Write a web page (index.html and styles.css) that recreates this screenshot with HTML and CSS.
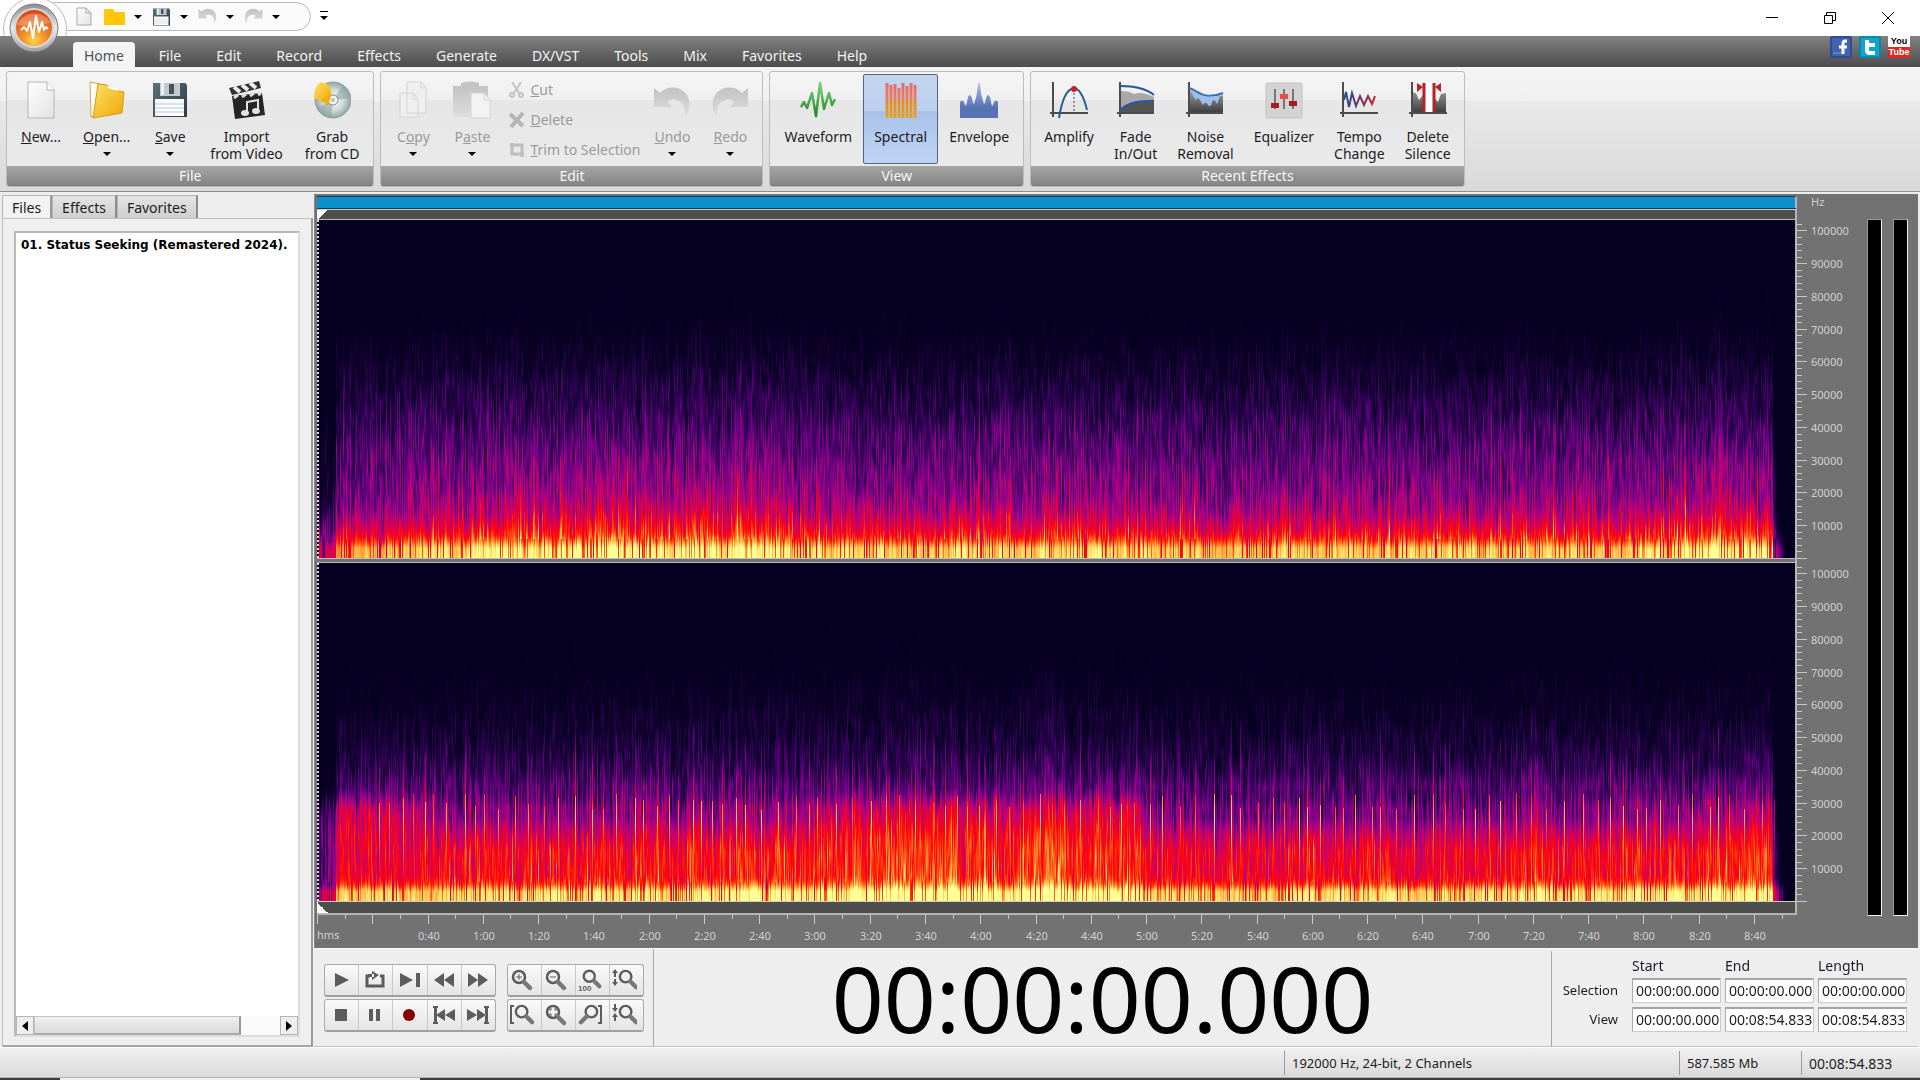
FILE: index.html
```html
<!DOCTYPE html>
<html lang="en">
<head>
    <meta charset="UTF-8">
    <meta name="viewport" content="width=device-width, initial-scale=1.0">
    <title>Audio Editor</title>
    <link rel="stylesheet" href="styles.css">
</head>
<body>
<!-- shared gradients and small shapes -->
<svg class="defs" aria-hidden="true">
    <defs>
        <linearGradient id="g-page" x1="0" y1="0" x2="1" y2="1"><stop offset="0" stop-color="#fff"/><stop offset="1" stop-color="#e2e2e2"/></linearGradient>
        <linearGradient id="g-folder" x1="0" y1="0" x2="1" y2="1"><stop offset="0" stop-color="#ffdf6b"/><stop offset="1" stop-color="#eea800"/></linearGradient>
        <linearGradient id="g-disk" x1="0" y1="0" x2="1" y2="1"><stop offset="0" stop-color="#5d7079"/><stop offset="1" stop-color="#2c3a44"/></linearGradient>
        <linearGradient id="g-green" x1="0" y1="0" x2="0" y2="1"><stop offset="0" stop-color="#7fd07c"/><stop offset="1" stop-color="#1f8a22"/></linearGradient>
        <linearGradient id="g-bars" gradientUnits="userSpaceOnUse" x1="0" y1="2" x2="0" y2="37"><stop offset="0" stop-color="#ea6a68"/><stop offset=".45" stop-color="#e97f5e"/><stop offset=".5" stop-color="#e08a2c"/><stop offset="1" stop-color="#e2a52e"/></linearGradient>
        <linearGradient id="g-blue" x1="0" y1="0" x2="0" y2="1"><stop offset="0" stop-color="#a9c0ee"/><stop offset=".7" stop-color="#5673b4"/></linearGradient>
        <linearGradient id="g-dark" x1="0" y1="0" x2="0" y2="1"><stop offset="0" stop-color="#999"/><stop offset="1" stop-color="#3c3c3c"/></linearGradient>
        <linearGradient id="g-tempo" x1="0" y1="0" x2="1" y2="0"><stop offset="0" stop-color="#1d5390"/><stop offset="1" stop-color="#c02030"/></linearGradient>
        <linearGradient id="g-fade" x1="0" y1="0" x2="0" y2="1"><stop offset="0" stop-color="#c2c2c2"/><stop offset="1" stop-color="#dedede"/></linearGradient>
        <linearGradient id="g-ring" x1="0" y1="0" x2="0" y2="1"><stop offset="0" stop-color="#8b8d90"/><stop offset=".5" stop-color="#e9eaec"/><stop offset="1" stop-color="#9c9ea2"/></linearGradient>
        <radialGradient id="g-orb" cx=".5" cy=".85" r=".8"><stop offset="0" stop-color="#ffd24a"/><stop offset=".45" stop-color="#f08a28"/><stop offset="1" stop-color="#dd4a1c"/></radialGradient>
        <radialGradient id="g-cd"><stop offset="0" stop-color="#fff"/><stop offset=".6" stop-color="#cfd8d8"/><stop offset="1" stop-color="#8fa3a3"/></radialGradient>
        <symbol id="i-disk" viewBox="0 0 36 36">
            <path d="M1 1h32l2 2v32H1z" fill="url(#g-disk)"/>
            <path d="M8 1h20v13H8z" fill="#c3cace"/><path d="M17 2h5v10h-5z" fill="#45545e"/><path d="M9 1h3v12H9z" fill="#eef1f2"/>
            <path d="M3 17h29v17H3z" fill="#fbfcfd"/><path d="M3 22h29M3 26h29M3 30h29" stroke="#b7c7dd"/>
        </symbol>
        <symbol id="i-undo" viewBox="0 0 36 36">
            <path d="M0 2l6 5C14-1 27 0 33 9c4 7 3 16-2 22 1-9-2-16-9-17-4-1-7 0-8 2l4 5H0z" fill="url(#g-fade)"/>
        </symbol>
        <symbol id="i-glass" viewBox="0 0 24 24">
            <circle cx="9" cy="9" r="6" fill="none" stroke="#5c5c5c" stroke-width="2.5"/>
            <path d="M14 14l6 6" stroke="#777" stroke-width="4.5" stroke-linecap="round"/>
        </symbol>
    </defs>
</svg>

<div class="app">
    <header class="titlebar">
        <div class="quick">
            <button aria-label="New"><svg width="16" height="20" viewBox="0 0 16 20"><path d="M1 1h9l5 5v12H1z" fill="url(#g-page)" stroke="#aaa"/><path d="M10 1v5h5" fill="none" stroke="#aaa"/></svg></button>
            <button aria-label="Open"><svg width="21" height="18" viewBox="0 0 21 18"><path d="M0 2q0-1 1-1h8l2 3h9q1 0 1 1v12H0z" fill="#ffc60a"/></svg></button>
            <i class="arrow"></i>
            <button aria-label="Save"><svg width="19" height="18"><use href="#i-disk"/></svg></button>
            <i class="arrow"></i>
            <button aria-label="Undo"><svg width="19" height="18"><use href="#i-undo"/></svg></button>
            <i class="arrow"></i>
            <button aria-label="Redo" class="flip"><svg width="19" height="18"><use href="#i-undo"/></svg></button>
            <i class="arrow"></i>
        </div>
        <button class="customize" aria-label="Customize toolbar"><i class="arrow"></i></button>
        <div class="window-buttons">
            <button aria-label="Minimize"><svg width="12" height="12"><path d="M0 5.5h12" stroke="#000"/></svg></button>
            <button aria-label="Restore"><svg width="12" height="12" fill="none" stroke="#000"><path d="M.5 3.500h8v8h-8zM2.500 3V.5h9v8H9"/></svg></button>
            <button aria-label="Close"><svg width="12" height="12"><path d="M0 0l12 12M12 0L0 12" stroke="#000"/></svg></button>
        </div>
    </header>
    <button class="orb" aria-label="Main menu">
        <svg width="50" height="50" viewBox="0 0 50 50">
            <circle cx="25" cy="25" r="24" fill="url(#g-ring)" stroke="#77797c"/>
            <circle cx="25" cy="25" r="20" fill="#d5d7da"/>
            <circle cx="25" cy="25" r="18" fill="url(#g-orb)"/>
            <path d="M8 22a18 15 0 0 1 34-2q-16 3-34 2z" fill="#fff" opacity=".25"/>
            <path d="M12 27l3-3 3 4 3-9 3 16 3-22 3 16 3-10 2 8 2-3 2 2" fill="none" stroke="#fff" stroke-width="2" stroke-linejoin="round"/>
        </svg>
    </button>

    <nav class="menubar">
        <button class="active">Home</button>
        <button>File</button>
        <button>Edit</button>
        <button>Record</button>
        <button>Effects</button>
        <button>Generate</button>
        <button>DX/VST</button>
        <button>Tools</button>
        <button>Mix</button>
        <button>Favorites</button>
        <button>Help</button>
        <div class="social">
            <a href="#facebook" aria-label="Facebook"><svg width="22" height="22"><rect width="22" height="22" rx="2" fill="#2f4d96"/><path d="M2 2h18v18H2z" fill="#4364ad"/><path d="M3 17h10" stroke="#7d97cf"/><path d="M17 5h-2q-2 0-2 3v10M9 11h8" stroke="#fff" stroke-width="3" fill="none"/></svg></a>
            <a href="#twitter" aria-label="Twitter"><svg width="22" height="22"><rect width="22" height="22" rx="2" fill="#0d86ad"/><path d="M2 2h18v18H2z" fill="#12a4cd"/><path d="M8 4v10q0 3 3 3h5M8 9h8" stroke="#fff" stroke-width="4" fill="none"/></svg></a>
            <a href="#youtube" class="youtube"><span>You</span><span>Tube</span></a>
        </div>
    </nav>

    <section class="ribbon">
        <div class="group">
            <div class="tools">
                <button class="tool"><svg width="36" height="38" viewBox="0 0 36 38"><path d="M5 1h19l7 8v28H5z" fill="url(#g-page)" stroke="#b4b4b4"/><path d="M24 1v8h7" fill="#fff" stroke="#b4b4b4"/></svg><span><u>N</u>ew...</span></button>
                <button class="tool"><svg width="36" height="38" viewBox="0 0 36 38"><path d="M1 1l10 2-3 31-6 2z" fill="#fff" stroke="#d9a63a"/><path d="M9 3l9 1 4 4 13 3-2 21-29 5z" fill="url(#g-folder)" stroke="#d99a10"/><path d="M17 5l13 3-1 2-8-2z" fill="#fff"/></svg><span><u>O</u>pen...</span><i class="arrow"></i></button>
                <button class="tool"><svg width="36" height="38" viewBox="0 -1 36 38"><use href="#i-disk" width="36" height="36"/></svg><span><u>S</u>ave</span><i class="arrow"></i></button>
                <button class="tool"><svg width="38" height="38" viewBox="0 0 38 38"><path d="M4 15l30-3 3 22-30 4z" fill="#252525"/><path d="M1 7L31 0l2 7L4 14z" fill="#333"/><path d="M6 6l6 5M14 4l6 5M22 2l6 5" stroke="#eee" stroke-width="4"/><path d="M6 17l4-3M14 16l4-3M22 15l4-3M30 14l3-2" stroke="#ddd" stroke-width="3"/><path d="M19 32V21l11-2v11" stroke="#dfe3e6" stroke-width="2" fill="none"/><ellipse cx="17" cy="32" rx="4" ry="3" fill="#dfe3e6"/><ellipse cx="28" cy="30" rx="4" ry="3" fill="#dfe3e6"/></svg><span>Import<br>from Video</span></button>
                <button class="tool"><svg width="38" height="38" viewBox="0 0 38 38"><circle cx="20" cy="19" r="18" fill="url(#g-cd)" stroke="#94a4a4"/><path d="M20 19L30 4q7 5 8 13zM20 19l-2 18q-10-1-14-10z" fill="#8ea7a5" opacity=".6"/><circle cx="20" cy="19" r="5" fill="#f4f4f4" stroke="#889"/><circle cx="20" cy="19" r="2" fill="#bbb"/><path d="M1 17Q1 5 8 1l9 3 1 9-6 9-11-5z" fill="url(#g-folder)"/><path d="M8 19l11-7-4 13z" fill="#efae18"/></svg><span>Grab<br>from CD</span></button>
            </div>
            <div class="caption">File</div>
        </div>
        <div class="group">
            <div class="tools">
                <button class="tool off"><svg width="36" height="38" viewBox="0 0 36 38"><path d="M8 1h14l5 6v25H8zM1 12h13l5 6v18H1z" transform="translate(4)" fill="#efefef" stroke="#d4d4d4"/><path d="M18 12v6h5M26 1v6h5" fill="none" stroke="#d4d4d4"/></svg><span>C<u>o</u>py</span><i class="arrow"></i></button>
                <button class="tool off"><svg width="38" height="38" viewBox="0 0 38 38"><path d="M0 5h35v31H0z" fill="url(#g-fade)"/><path d="M8 2q10-3 18 0v6H8z" fill="#c4c4c4"/><path d="M18 12h13l6 7v18H18z" fill="#f3f3f3" stroke="#d4d4d4"/><path d="M31 12v7h6" fill="none" stroke="#d4d4d4"/></svg><span>P<u>a</u>ste</span><i class="arrow"></i></button>
                <div class="stack">
                    <button><svg width="16" height="16" fill="none" stroke="#c4c4c4" stroke-width="2"><path d="M3 0l7 11M12 0L5 11"/><circle cx="3" cy="13" r="2"/><circle cx="12" cy="13" r="2"/></svg><span><u>C</u>ut</span></button>
                    <button><svg width="16" height="16"><path d="M1 2l13 12M14 1L2 15" stroke="#b5b5b5" stroke-width="4"/></svg><span><u>D</u>elete</span></button>
                    <button><svg width="16" height="16"><path d="M1 3h12v12M3 1v11h12" fill="none" stroke="#bdbdbd" stroke-width="3"/></svg><span><u>T</u>rim to Selection</span></button>
                </div>
                <button class="tool off"><svg width="36" height="38"><use href="#i-undo" y="5" width="36" height="36"/></svg><span><u>U</u>ndo</span><i class="arrow"></i></button>
                <button class="tool off flip"><svg width="36" height="38"><use href="#i-undo" y="5" width="36" height="36"/></svg><span><u>R</u>edo</span><i class="arrow"></i></button>
            </div>
            <div class="caption">Edit</div>
        </div>
        <div class="group">
            <div class="tools">
                <button class="tool"><svg width="36" height="38" viewBox="0 0 36 38"><path d="M1 26l3-5 3 6 5-15 4 23L20 2l4 26 5-16 3 12 3-6" fill="none" stroke="url(#g-green)" stroke-width="2.500" stroke-linejoin="round"/></svg><span>Waveform</span></button>
                <button class="tool active"><svg width="36" height="38" viewBox="0 0 36 38"><path d="M5 2v35M9 4v33M13 3v34M17 7v30M21 2v35M25 5v32M29 2v35M33 4v33" transform="translate(-1)" fill="none" stroke="url(#g-bars)" stroke-width="3"/></svg><span>Spectral</span></button>
                <button class="tool"><svg width="38" height="38" viewBox="0 0 38 38"><path d="M0 37V21q3-4 5 3l1 1q1-3 2-9 3-6 5 6l1 1q3-8 4-18 1-8 2 0 1 10 4 18l1-1q2-12 5-6 1 6 2 9l1-1q2-7 5-3v16z" fill="url(#g-blue)"/></svg><span>Envelope</span></button>
            </div>
            <div class="caption">View</div>
        </div>
        <div class="group effects">
            <div class="tools">
                <button class="tool"><svg width="38" height="38" viewBox="0 0 38 38"><path d="M3 1v35M0 32h38" stroke="#4c4c4c" stroke-width="2"/><path d="M24 8v24" stroke="#444" stroke-dasharray="2"/><path d="M9 37C15 0 30-2 37 29" fill="none" stroke="#1f5f96" stroke-width="2"/><circle cx="24" cy="8" r="3" fill="#c91f2b"/></svg><span>Amplify</span></button>
                <button class="tool"><svg width="38" height="38" viewBox="0 0 38 38"><path d="M4 10q8 0 13 3 8-3 20 3v16H4z" fill="#a8a8a8"/><path d="M4 29q4-6 9-5 8-4 24-3v11H4z" fill="#555"/><path d="M3 1v35M0 32h37" stroke="#4c4c4c" stroke-width="2"/><path d="M3 5q23 0 34 9M3 29q10-10 34-9" fill="none" stroke="#2456a5" stroke-width="2"/></svg><span>Fade<br>In/Out</span></button>
                <button class="tool"><svg width="38" height="38" viewBox="0 0 38 38"><path d="M3 8c9 2 14 13 34 5v19H3z" fill="#9dbfea"/><path d="M3 12q3-3 4 3l3 4q2-4 4 0l3 5q3-5 5 0 3 3 4-3 2-5 5 2l3-8 3 0v17H3z" fill="url(#g-dark)"/><path d="M3 1v35M0 32h37" stroke="#4c4c4c" stroke-width="2"/><path d="M3 7c9 2 14 13 34 5" fill="none" stroke="#3b70b0" stroke-width="2"/></svg><span>Noise<br>Removal</span></button>
                <button class="tool"><svg width="38" height="38" viewBox="0 0 38 38"><rect x="1" y="2" width="36" height="35" rx="2" fill="#d3d3d3" stroke="#c2c2c2"/><path d="M10 8v20M19 8v20M28 8v20" stroke="#777" stroke-width="2"/><path d="M6 22h8v5H6zM24 20h8v5h-8z" fill="#a31c22"/><path d="M15 13h8v5h-8z" fill="#ea4a4a"/></svg><span>Equalizer</span></button>
                <button class="tool"><svg width="38" height="38" viewBox="0 0 38 38"><path d="M3 1v35M0 32h38" stroke="#4c4c4c" stroke-width="2"/><path d="M4 19l2-8 3 15 3-14 4 13 4-10 4 9 4-9 4 8 3-8" fill="none" stroke="url(#g-tempo)" stroke-width="2"/></svg><span>Tempo<br>Change</span></button>
                <button class="tool"><svg width="38" height="38" viewBox="0 0 38 38"><path d="M3 9q2 4 4 3l3 7 4-5v18H3zM26 18l3 3 3-8 5-1v20H26z" fill="url(#g-dark)"/><path d="M3 1v35M0 32h38" stroke="#4c4c4c" stroke-width="2"/><path d="M15 1h10v30H15z" fill="#fff"/><path d="M15 2v29M25 2v29" stroke="#b5222c" stroke-width="3"/><path d="M8 2l6 4-6 5zM32 2l-6 4 6 5z" fill="#b5222c"/></svg><span>Delete<br>Silence</span></button>
            </div>
            <div class="caption">Recent Effects</div>
        </div>
    </section>

    <main class="workspace">
        <aside class="sidebar">
            <div class="side-tabs">
                <button class="active">Files</button>
                <button>Effects</button>
                <button>Favorites</button>
            </div>
            <div class="side-panel">
                <div class="file-list">
                    <div class="file">01. Status Seeking (Remastered 2024).</div>
                    <div class="scrollbar">
                        <button aria-label="Scroll left"><svg width="6" height="10"><path d="M6 0v10L0 5z"/></svg></button>
                        <div class="track"><div class="thumb"></div></div>
                        <button aria-label="Scroll right"><svg width="6" height="10"><path d="M0 0v10l6-5z"/></svg></button>
                    </div>
                </div>
            </div>
        </aside>

        <div class="content">
            <section class="editor">
                <div class="tracks">
                    <div class="overview"></div>
                    <div class="marker-strip"></div>
                    <div class="channel"><canvas id="channel-left"></canvas></div>
                    <div class="splitter"></div>
                    <div class="channel"><canvas id="channel-right"></canvas></div>
                    <div class="marker-strip bottom"></div>
                    <svg class="time-ruler" id="time-ruler"></svg>
                </div>
                <div class="freq">
                    <div class="unit">Hz</div>
                    <svg class="freq-ruler"></svg>
                    <svg class="freq-ruler"></svg>
                    <div class="freq-end"></div>
                </div>
                <div class="meters"><div></div><div></div></div>
            </section>

            <section class="transport">
                <div class="button-rows">
                    <div class="buttons">
                        <button aria-label="Play"><svg width="24" height="24"><path d="M5 5v14l14-7z"/></svg></button>
                        <button aria-label="Loop"><svg width="24" height="24"><path d="M6 8H3v10h16V8h-3" fill="none" stroke="#5c5c5c" stroke-width="3"/><path d="M8 3v9l7-5zM4 6h6v3H4z"/></svg></button>
                        <button aria-label="Play to end"><svg width="24" height="24"><path d="M2 5v14l13-7zM18 5h4v14h-4z"/></svg></button>
                        <button aria-label="Rewind"><svg width="24" height="24"><path d="M12 5v14L2 12zM22 5v14l-10-7z"/></svg></button>
                        <button aria-label="Forward"><svg width="24" height="24"><path d="M2 5v14l10-7zM12 5v14l10-7z"/></svg></button>
                    </div>
                    <div class="buttons zoom">
                        <button aria-label="Zoom in"><svg width="24" height="24"><use href="#i-glass"/><path d="M6 9h6M9 6v6" stroke="#5c5c5c"/></svg></button>
                        <button aria-label="Zoom out"><svg width="24" height="24"><use href="#i-glass"/><path d="M6 9h6" stroke="#5c5c5c"/></svg></button>
                        <button aria-label="Zoom 100%"><svg width="24" height="24"><use href="#i-glass" x="3" width="22" height="22"/><text x="0" y="23" class="hundred">100</text></svg></button>
                        <button aria-label="Vertical zoom in"><svg width="26" height="24"><use href="#i-glass" x="6" width="23" height="23"/><path d="M4 1l3 4H5v4H3V5H1zM3 11h2v3h2l-3 4-3-4h2z"/></svg></button>
                    </div>
                    <div class="buttons">
                        <button aria-label="Stop"><svg width="24" height="24"><path d="M5 6h12v12H5z"/></svg></button>
                        <button aria-label="Pause"><svg width="24" height="24"><path d="M5 6h4v12H5zM12 6h4v12h-4z"/></svg></button>
                        <button aria-label="Record"><svg width="24" height="24"><circle cx="11" cy="12" r="6" fill="#850000"/></svg></button>
                        <button aria-label="Go to start"><svg width="24" height="24"><path d="M13 6v12L4 12zM23 6v12l-10-6zM1 3h5v2H5v14h1v2H1v-2h1V5H1z"/></svg></button>
                        <button aria-label="Go to end"><svg width="24" height="24"><path d="M1 6v12l10-6zM11 6v12l9-6zM18 3h5v2h-1v14h1v2h-5v-2h1V5h-1z"/></svg></button>
                    </div>
                    <div class="buttons zoom">
                        <button aria-label="Zoom to selection start"><svg width="24" height="24"><use href="#i-glass" x="3" width="23" height="23"/><path d="M4 3H1v17h3" fill="none" stroke="#5c5c5c" stroke-width="2"/></svg></button>
                        <button aria-label="Zoom to selection"><svg width="24" height="24"><use href="#i-glass"/><path d="M6 8V6h2M10 6h2v2M12 10v2h-2M8 12H6v-2" fill="none" stroke="#5c5c5c"/></svg></button>
                        <button aria-label="Zoom to selection end"><svg width="24" height="24"><use href="#i-glass" transform="matrix(-1 0 0 1 22 0)" width="23" height="23"/><path d="M20 3h3v17h-3" fill="none" stroke="#5c5c5c" stroke-width="2"/></svg></button>
                        <button aria-label="Vertical zoom out"><svg width="26" height="24"><use href="#i-glass" x="6" width="23" height="23"/><path d="M4 9l3-4H5V1H3v4H1zM3 18h2v-4h2l-3-4-3 4h2z"/></svg></button>
                    </div>
                </div>
                <output class="clock">00:00:00.000</output>
                <div class="ranges">
                    <span></span>
                    <span>Start</span>
                    <span>End</span>
                    <span>Length</span>
                    <label for="sel-start">Selection</label>
                    <input id="sel-start" value="00:00:00.000">
                    <input aria-label="Selection end" value="00:00:00.000">
                    <input aria-label="Selection length" value="00:00:00.000">
                    <label for="view-start">View</label>
                    <input id="view-start" value="00:00:00.000">
                    <input aria-label="View end" value="00:08:54.833">
                    <input aria-label="View length" value="00:08:54.833">
                </div>
            </section>
        </div>
    </main>

    <footer class="statusbar">
        <span class="format">192000 Hz, 24-bit, 2 Channels</span>
        <span class="size">587.585 Mb</span>
        <span class="duration">00:08:54.833</span>
    </footer>
    <div class="taskbar-edge"></div>
</div>
<script src="script.js"></script>
</body>
</html>
```

FILE: styles.css
```css
* {
    box-sizing: border-box;
}

body {
    margin: 0;
    font-family: "Noto Sans", Tahoma, sans-serif;
    font-size: 14px;
    line-height: 17px;
    color: #1c1c24;
    background: #eee;
}

button {
    font: inherit;
    color: inherit;
    border: none;
    background: none;
    padding: 0;
    margin: 0;
}

svg {
    display: block;
}

.defs {
    position: absolute;
    width: 0;
    height: 0;
}

.app {
    position: relative;
    display: flex;
    flex-direction: column;
    height: 100vh;
    overflow: hidden;
}

.arrow {
    display: block;
    width: 0;
    border: 4px solid transparent;
    border-top-color: #000;
    border-bottom: none;
}

.flip svg {
    transform: scaleX(-1);
}

/* title bar */
.titlebar {
    position: relative;
    display: flex;
    height: 36px;
    padding: 2px 0 0 40px;
    background: #fff;
    overflow: hidden;
}

.titlebar::before {
    content: "";
    position: absolute;
    left: 3px;
    top: -3px;
    width: 62px;
    height: 62px;
    border: 1px solid #bbb;
    border-radius: 50%;
    background: #fff;
}

.quick {
    display: flex;
    align-items: center;
    gap: 9px;
    width: 271px;
    height: 29px;
    padding-left: 35px;
    border: 1px solid #b9b9b9;
    border-radius: 15px;
    background: #fafafa;
}

.quick button:first-child {
    margin-right: 3px;
}

.quick .arrow + button {
    margin-left: 1px;
}

.customize {
    margin: 9px 0 0 9px;
    padding-top: 3px;
    border-top: 1px solid #000;
    height: 10px;
}

.window-buttons {
    display: flex;
    gap: 46px;
    margin: 10px 26px 0 auto;
}

.window-buttons button {
    height: 12px;
}

.orb {
    position: absolute;
    left: 9px;
    top: 3px;
}

/* menu tabs */
.menubar {
    display: flex;
    align-items: flex-end;
    gap: 13px;
    height: 31px;
    padding: 0 10px 0 73px;
    background: linear-gradient(#828282, #4c4c4c);
    color: #f2f2f2;
}

.menubar > button {
    height: 25px;
    padding: 2px 11px 0;
    border-radius: 4px 4px 0 0;
}

.menubar > .active {
    background: #f4f4f4;
    color: #4c505c;
}

.social {
    display: flex;
    gap: 7px;
    margin-left: auto;
    align-self: flex-start;
}

.youtube {
    display: flex;
    flex-direction: column;
    width: 22px;
    height: 22px;
    font: bold 9px/11px "Liberation Sans", sans-serif;
    text-align: center;
    text-decoration: none;
    color: #000;
    background: linear-gradient(#fff 50%, #dc2a22 50%);
}

.youtube span + span {
    color: #fff;
}

/* ribbon */
.ribbon {
    display: flex;
    gap: 6px;
    height: 125px;
    padding: 4px 6px;
    background: linear-gradient(#f4f4f4, #f0f0f0 34px, #e9e9e9 34px, #d9d9d9);
    border-bottom: 1px solid #8e8e8e;
}

.group {
    display: flex;
    flex-direction: column;
    border: 1px solid #bcbcbc;
    border-radius: 3px;
    background: linear-gradient(#f5f5f5, #efefef 28px, #e6e6e6 28px, #ebebeb);
    overflow: hidden;
}

.tools {
    display: flex;
    flex: 1;
    padding: 2px 3px;
}

.tool {
    display: flex;
    flex-direction: column;
    align-items: center;
    padding: 6px 10px 0;
    border: 1px solid transparent;
    border-radius: 2px;
}

.effects .tool {
    padding: 6px 9px 0;
}

.tool svg {
    margin-bottom: 9px;
}

.tool .arrow {
    margin-top: 7px;
}

.tool.active {
    border-color: #57657c;
    background: linear-gradient(#c3d5ef, #bccfed 36px, #a9c2ea 36px, #c0d4f4);
}

.off,
.stack {
    color: #9a9a9a;
}

.stack {
    display: flex;
    flex-direction: column;
    gap: 13px;
    padding: 7px 3px 0 7px;
}

.stack button {
    display: flex;
    align-items: center;
    gap: 5px;
}

.caption {
    height: 20px;
    line-height: 20px;
    text-align: center;
    color: #f6f6f6;
    background: linear-gradient(#a5a5a5, #858585);
    border-bottom: 1px solid #777;
}

/* left panel */
.workspace {
    display: flex;
    flex: 1;
    min-height: 0;
}

.sidebar {
    display: flex;
    flex-direction: column;
    width: 314px;
    padding: 3px 1px 0 2px;
    background: #eee;
}

.side-tabs {
    display: flex;
    height: 23px;
}

.side-tabs button {
    padding: 0 9px;
    border: 1px solid #b5b5b5;
    border-right: 2px solid #8c8c8c;
    border-bottom: none;
    background: linear-gradient(#e4e4e4, #cfcfcf);
}

.side-tabs .active {
    border-right-color: #999;
    background: #f2f2f2;
}

.side-panel {
    flex: 1;
    display: flex;
    padding: 12px 11px 8px 11px;
    border: 1px solid #c2c2c2;
    border-right: 2px solid #9a9a9a;
    border-bottom: 2px solid #a6a6a6;
    background: #efefef;
}

.file-list {
    display: flex;
    flex-direction: column;
    justify-content: space-between;
    flex: 1;
    min-width: 0;
    border: 2px solid #b9b9b9;
    border-right-color: #ddd;
    border-bottom-color: #ddd;
    background: #fff;
}

.file {
    padding: 4px 0 0 5px;
    font: bold 12px/17px "DejaVu Sans", sans-serif;
    color: #000;
    white-space: nowrap;
    overflow: hidden;
}

.scrollbar {
    display: flex;
    height: 19px;
    background: #fafafa;
}

.scrollbar button {
    display: grid;
    place-items: center;
    width: 18px;
    border: 1px solid #b5b5b5;
    background: #eee;
}

.track {
    flex: 1;
}

.thumb {
    width: 84%;
    height: 100%;
    border: 1px solid #c4c4c4;
    border-right: 2px solid #999;
    border-bottom: 2px solid #aaa;
    background: linear-gradient(#f0f0f0, #dadada);
}

/* editor */
.content {
    display: flex;
    flex-direction: column;
    flex: 1;
    min-width: 0;
    padding-top: 2px;
}

.editor {
    display: flex;
    flex: 1;
    min-height: 0;
    margin-right: 2px;
    border-left: 1px solid #888;
    background: #727272;
}

.tracks {
    display: flex;
    flex-direction: column;
    flex: 1;
    min-width: 0;
    padding: 2px 0 0 2px;
}

.overview {
    height: 13px;
    border: 1px solid #123a50;
    border-left: none;
    background: #0b90cc;
}

.marker-strip {
    height: 11px;
    border-top: 1px solid #ccc;
    border-bottom: 1px solid #bbb;
    background: linear-gradient(to bottom right, #fff 50%, transparent 50%) 0 0 / 11px 11px no-repeat, #4e4e4c;
}

.marker-strip.bottom {
    height: 14px;
    border-bottom: 2px solid #b5b5b5;
    background: linear-gradient(to top right, #fff 50%, transparent 50%) 0 0 / 11px 11px no-repeat, #4e4e4c;
}

.overview,
.marker-strip,
.channel,
.splitter {
    border-right: 2px solid #b5b5b5;
}

.channel {
    flex: 1;
    min-height: 0;
    border-left: 2px dotted #ddd;
    background: #050020;
}

.channel canvas {
    display: block;
    width: 100%;
    height: 100%;
}

.splitter {
    height: 5px;
    border-top: 1px solid #bbb;
    border-bottom: 1px solid #bbb;
    background: #727272;
}

.time-ruler {
    width: 100%;
    height: 33px;
    overflow: visible;
}

.time-ruler text,
.freq-ruler text {
    font-size: 11px;
    fill: #d0d0d0;
}

.time-ruler line,
.freq-ruler line {
    stroke: #c8c8c8;
    shape-rendering: crispEdges;
}

.freq {
    display: flex;
    flex-direction: column;
    width: 70px;
}

.unit {
    height: 26px;
    padding-left: 14px;
    font-size: 11px;
    line-height: 15px;
    color: #d0d0d0;
}

.freq-ruler {
    flex: 1;
    min-height: 0;
    width: 100%;
    overflow: visible;
}

.freq-ruler + .freq-ruler {
    margin-top: 5px;
}

.freq-end {
    height: 47px;
}

.meters {
    display: flex;
    gap: 11px;
    padding: 25px 10px 32px 0;
}

.meters div {
    width: 15px;
    border: 1px solid #9a9a9a;
    border-right-color: #eee;
    border-bottom-color: #eee;
    background: #000;
}

/* transport */
.transport {
    display: flex;
    height: 99px;
    margin-right: 2px;
    border-top: 1px solid #fafafa;
    border-bottom: 1px solid #c0c0c0;
    background: #eee;
}

.button-rows {
    display: grid;
    grid-template-columns: 172px 137px;
    grid-auto-rows: 33px;
    gap: 2px 11px;
    padding: 15px 9px 0 10px;
    border-right: 1px solid #a8a8a8;
}

.buttons {
    display: flex;
    border: 1px solid #aaa;
    border-bottom: 2px solid #a0a0a0;
    border-radius: 3px;
    background: linear-gradient(#fafafa, #e4e4e4);
}

.buttons button {
    display: grid;
    place-items: center;
    flex: 1;
    min-width: 0;
}

.buttons button + button {
    border-left: 1px solid #c8c8c8;
}

.buttons.zoom button {
    padding-right: 5px;
}

.buttons svg {
    fill: #5c5c5c;
}

.hundred {
    font: bold 8px "Liberation Sans", sans-serif;
    stroke: #eee;
    stroke-width: 2px;
    paint-order: stroke;
}

.clock {
    flex: 1;
    text-align: center;
    font-size: 91px;
    line-height: 98px;
    color: #000;
}

.ranges {
    display: grid;
    grid-template-columns: 68px 89px 89px 89px;
    grid-template-rows: 17px 25px 25px;
    gap: 5px 4px;
    margin-top: 2px;
    padding: 7px 11px 0 8px;
    align-items: center;
    border-left: 1px solid #a8a8a8;
}

.ranges span {
    margin-bottom: 1px;
}

.ranges {
    row-gap: 4px;
    padding-top: 6px;
}

.ranges label {
    padding-right: 10px;
    text-align: right;
    font-size: 13px;
}

.ranges input {
    width: 100%;
    height: 25px;
    padding: 0 0 1px 3px;
    border: 1px solid #ccc;
    border-top: 2px solid #a5a5a5;
    border-left-color: #aaa;
    font: inherit;
    color: inherit;
    background: #fff;
}

/* status bar */
.statusbar {
    display: flex;
    justify-content: flex-end;
    align-items: center;
    height: 31px;
    padding-right: 2px;
    border-top: 1px solid #fff;
    border-bottom: 1px solid #b5b5b5;
    background: linear-gradient(#f0f0f0, #dadada);
}

.statusbar span {
    padding: 4px 0 3px 7px;
    border-left: 1px solid #9a9a9a;
}

.format {
    width: 395px;
    font-size: 13px;
}

.size {
    width: 122px;
    font-size: 13px;
}

.duration {
    width: 117px;
}

.taskbar-edge {
    height: 2px;
    background: linear-gradient(90deg, #3c3c44 60px, #eee 60px, #eee 420px, #3c3c44 420px);
}
```

FILE: script.js
```js
const DURATION = 534.833;
const MAX_FREQ = 103200;
const SVG_NS = 'http://www.w3.org/2000/svg';

function add(parent, tag, attrs, text) {
    const el = document.createElementNS(SVG_NS, tag);
    for (const key in attrs) el.setAttribute(key, attrs[key]);
    if (text) el.textContent = text;
    parent.appendChild(el);
}

// rulers
function drawTimeRuler() {
    const svg = document.getElementById('time-ruler');
    const width = svg.clientWidth - 2;
    for (let t = 0; t < DURATION; t += 10) {
        const x = Math.round(t / DURATION * width);
        const major = t % 20 === 0;
        add(svg, 'line', { x1: x + 0.5, x2: x + 0.5, y1: 0, y2: major ? 9 : 4 });
        if (major && t >= 40) {
            const label = Math.floor(t / 60) + ':' + String(t % 60).padStart(2, '0');
            add(svg, 'text', { x: x + 1, y: 25, 'text-anchor': 'middle' }, label);
        }
    }
    add(svg, 'text', { x: 0, y: 24 }, 'hms');
}

function drawFreqRuler(svg) {
    const height = svg.clientHeight;
    for (let f = 0; f < MAX_FREQ; f += 2000) {
        const y = Math.round(height - f / MAX_FREQ * height);
        const major = f % 10000 === 0;
        add(svg, 'line', { x1: 0, x2: major ? 10 : 5, y1: y + 0.5, y2: y + 0.5 });
        if (major && f > 0) add(svg, 'text', { x: 14, y: y + 5 }, String(f));
    }
}

// spectrogram colours, from silence to full level
const STOPS = [
    [0, 5, 0, 32], [0.12, 14, 0, 42], [0.25, 50, 0, 88], [0.4, 125, 0, 138],
    [0.52, 190, 0, 120], [0.6, 228, 0, 60], [0.68, 255, 8, 8], [0.78, 255, 80, 20],
    [0.87, 255, 165, 60], [0.95, 255, 225, 105], [1, 255, 255, 150]
];

function colour(v) {
    v = Math.max(0, Math.min(1, v));
    let i = 1;
    while (v > STOPS[i][0]) i++;
    const a = STOPS[i - 1], b = STOPS[i];
    const k = (v - a[0]) / (b[0] - a[0]);
    return [1, 2, 3].map(n => a[n] + (b[n] - a[n]) * k);
}

function curve(points, x) {
    for (let i = 1; i < points.length; i++) {
        if (x <= points[i][0]) {
            const a = points[i - 1], b = points[i];
            return a[1] + (b[1] - a[1]) * (x - a[0]) / (b[0] - a[0]);
        }
    }
    return points[points.length - 1][1];
}

function generator(seed) {
    return function () {
        seed = (seed * 1664525 + 1013904223) >>> 0;
        return seed / 4294967296;
    };
}

// level by kHz
const LEFT = [[0, 0.94], [3, 0.92], [5, 0.8], [7, 0.68], [10, 0.6], [14, 0.5], [20, 0.42], [30, 0.35], [42, 0.25], [55, 0.14], [66, 0.04], [74, -0.06], [104, -0.2]];
const RIGHT = [[0, 0.97], [3, 0.95], [5, 0.78], [7, 0.68], [20, 0.66], [28, 0.58], [33, 0.34], [40, 0.22], [52, 0.12], [64, 0.03], [74, -0.06], [104, -0.2]];
// loudness over seconds
const LEFT_GAIN = [[0, -0.06], [30, -0.03], [60, 0.02], [100, 0.05], [168, 0.06], [172, -0.02], [290, 0], [310, -0.03], [480, -0.01], [500, 0.03], [535, 0.03]];
const RIGHT_GAIN = [[0, -0.08], [34, -0.06], [100, -0.01], [180, 0.02], [200, 0.07], [296, 0.06], [300, -0.05], [400, -0.04], [480, 0], [535, 0.03]];
// how deep the right channel thins out between 16 and 32 kHz
const THIN_TIME = [[0, 0], [30, 0.1], [45, 1], [170, 0.8], [200, 0.2], [295, 0.2], [302, 1.1], [480, 1], [535, 0.5]];
const THIN_FREQ = [[0, 0], [15, 0], [26, 0.19], [30, 0.14], [35, 0], [104, 0]];

function drawChannel(id, profile, gains, seed) {
    const canvas = document.getElementById(id);
    const w = canvas.width = canvas.clientWidth;
    const h = canvas.height = canvas.clientHeight;
    const ctx = canvas.getContext('2d');
    const image = ctx.createImageData(w, h);
    const random = generator(seed);
    const right = id === 'channel-right';
    let nextHit = 60;
    let slow = 0;

    for (let x = 0; x < w; x++) {
        const t = x / w * DURATION;
        slow = slow * 0.8 + (random() - 0.5) * 0.05;
        const gain = curve(gains, t) + slow;
        const low = random() < 0.3 ? -random() * 0.3 : random() * 0.06;
        const streak = (random() - 0.5) * 0.15;
        const peak = random() < 0.08 ? 0.12 : 0;
        // each column reads the profile a little stretched, so the bands get ragged edges
        const stretch = 0.85 + random() * 0.4;
        const thin = curve(THIN_TIME, t) * (0.7 + random() * 0.6);
        let hit = 0;
        let hitTop = 0;
        if (x >= nextHit) {
            hit = 0.4 + random() * 0.6;
            hitTop = 28 + random() * 5;
            nextHit = x + 8 + Math.floor(random() * 12);
        }
        // value noise down the column, one knot every 16px
        const knots = [];
        for (let i = 0; i < h / 16 + 2; i++) knots.push(random() - 0.5);
        const shift = random() * 16;

        for (let y = 0; y < h; y++) {
            const f = (h - y) / h * MAX_FREQ / 1000;
            const p = (y + shift) / 16;
            const i = Math.floor(p);
            const noise = knots[i] + (knots[i + 1] - knots[i]) * (p - i);
            const bass = Math.max(0, Math.min(1, (8 - f) / 4));
            const shape = f < 12 ? f / stretch : f - 12 + 12 / stretch;
            let v = curve(profile, shape) + gain * (f > 34 ? 0.3 : f > 14 ? 1 - (f - 14) * 0.035 : 1);

            const rough = !right && f > 12 || f > 34 ? 0.26 : 0.2;
            v += bass * (low + noise * 0.06);
            v += (1 - bass) * (streak * (f > 45 ? 0.5 : 1) + noise * rough);
            if (f > 6 && f < 30) v += peak * (30 - f) / 24;

            if (right) {
                v -= thin * curve(THIN_FREQ, f);
                if (hit && f > 5 && f < hitTop) v = Math.max(v, 0.7 + hit * 0.25 - Math.abs(f - 25) * 0.012);
                else if (hit && f >= hitTop && f < 66) v += hit * 0.24 * (66 - f) / 36;
            } else if (hit > 0.7 && f > 6 && f < 31) {
                v += 0.13;
            }
            if (t < 6) v -= f < 6 ? 0.3 : 0.26;
            if (t > 526.500) v -= 0.25 + (t - 526.500) * 0.14;

            const c = colour(v);
            const o = (y * w + x) * 4;
            image.data[o] = c[0];
            image.data[o + 1] = c[1];
            image.data[o + 2] = c[2];
            image.data[o + 3] = 255;
        }
    }
    ctx.putImageData(image, 0, 0);
}

drawTimeRuler();
document.querySelectorAll('.freq-ruler').forEach(drawFreqRuler);
drawChannel('channel-left', LEFT, LEFT_GAIN, 7);
drawChannel('channel-right', RIGHT, RIGHT_GAIN, 21);
```
